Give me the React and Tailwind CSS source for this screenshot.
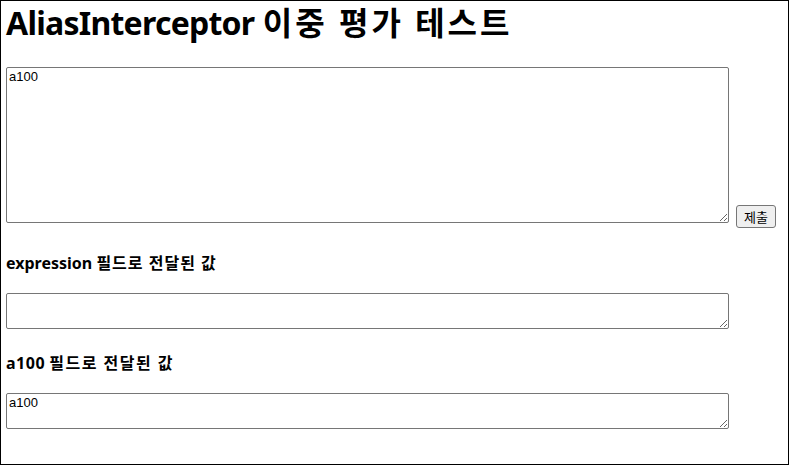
import React from "react";

const areaCls =
  "w-[723px] border border-[#767676] rounded-[2px] px-[2px] py-[1px] text-[13px] leading-[16px] outline-none font-['Liberation_Sans','Noto_Sans_CJK_KR',sans-serif]";

export default function App() {
  return (
    <div className="w-[789px] h-[465px] border border-black bg-white text-black px-[5px] overflow-hidden font-['Noto_Sans','Noto_Sans_CJK_KR',sans-serif]">
      <h1 className="text-[32px] font-bold leading-[40px] pt-[2px] h-[66px]">
        <span className="tracking-[-0.75px]">AliasInterceptor</span>{" "}
        <span className="tracking-[3px]">이중 평가 테스트</span>
      </h1>

      <div className="flex items-start">
        <textarea defaultValue="a100" className={`${areaCls} h-[156px]`} />
        <button className="ml-[7px] mt-[138px] h-[23px] px-[7px] border border-[#767676] rounded-[3px] bg-[#efefef] text-[13px] leading-[19px] font-['Noto_Sans_CJK_KR',sans-serif]">
          제출
        </button>
      </div>

      <div className="mt-[25px] h-[20px] text-[16px] font-bold leading-[20px]">
        expression <span className="tracking-[1px]">필드로 전달된 값</span>
      </div>
      <textarea className={`${areaCls} block mt-[20px] h-[36px]`} />

      <div className="mt-[24px] h-[20px] text-[16px] font-bold leading-[20px]">
        <span className="tracking-[0.5px]">a100</span>{" "}
        <span className="tracking-[1.5px]">필드로 전달된 값</span>
      </div>
      <textarea defaultValue="a100" className={`${areaCls} block mt-[20px] h-[36px]`} />
    </div>
  );
}
